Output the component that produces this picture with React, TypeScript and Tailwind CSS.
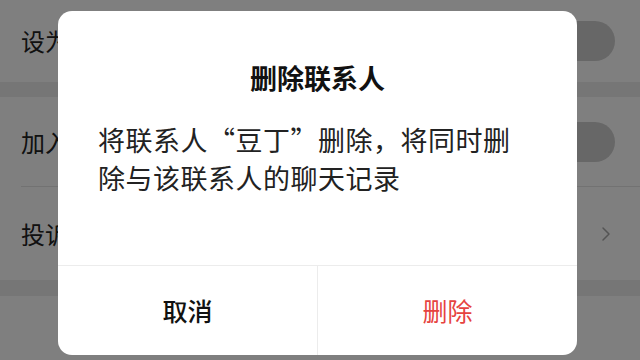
import { ChevronRight } from "lucide-react";

const fuente = { fontFamily: '"Noto Sans CJK SC", "Noto Sans", sans-serif' };

function FilaAjuste({ etiqueta, alto, interruptor, flecha, linea }: { etiqueta: string; alto: string; interruptor?: boolean; flecha?: boolean; linea?: boolean }) {
  return (
    <div className={`relative flex items-center justify-between pl-[21px] pr-[25px] bg-white ${alto}`}>
      <span className="text-[24px] leading-none text-[#222]">{etiqueta}</span>
      {interruptor && <span className="h-[40px] w-[66px] rounded-full bg-[#cfcfcf]" />}
      {flecha && <ChevronRight className="h-[24px] w-[24px] -mr-[3px] text-[#a8a8a8]" strokeWidth={1.5} />}
      {linea && <div className="absolute bottom-0 left-[21px] right-0 h-px bg-[#e5e5e5]" />}
    </div>
  );
}

export default function App() {
  return (
    <div className="relative h-[360px] w-[640px] overflow-hidden bg-[#ededed]" style={fuente}>
      {/* Página de ajustes de fondo */}
      <div className="flex flex-col">
        <FilaAjuste etiqueta="设为星标朋友" alto="h-[82px]" interruptor />
        <div className="h-[15px]" />
        <FilaAjuste etiqueta="加入黑名单" alto="h-[90px]" interruptor linea />
        <FilaAjuste etiqueta="投诉" alto="h-[93px]" flecha />
        <div className="h-[16px]" />
        <FilaAjuste etiqueta="" alto="h-[64px]" />
      </div>

      {/* Capa oscura */}
      <div className="absolute inset-0 bg-black/50" />

      {/* Diálogo */}
      <div className="absolute left-[58px] top-[11px] flex h-[344px] w-[519px] flex-col rounded-[14px] bg-white">
        <div className="flex-1">
          <h2 className="pt-[49px] text-center text-[27px] font-semibold leading-[36px] text-[#111]">删除联系人</h2>
          <p className="mt-[25px] max-w-[476px] pl-[40px] pr-[16px] text-[27px] leading-[38px] tracking-[0.5px] text-[#222]">
            将联系人“豆丁”删除，将同时删除与该联系人的聊天记录
          </p>
        </div>
        <div className="flex h-[90px] border-t border-[#ececec]">
          <button className="flex-1 text-[25px] font-medium text-[#111]">取消</button>
          <div className="w-px bg-[#ececec]" />
          <button className="flex-1 text-[25px] text-[#e64340]">删除</button>
        </div>
      </div>
    </div>
  );
}
